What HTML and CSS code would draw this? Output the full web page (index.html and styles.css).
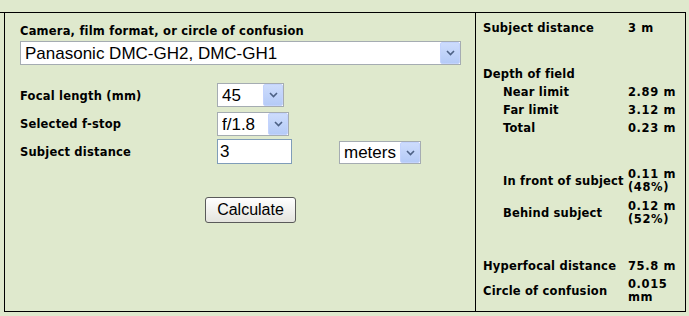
FILE: index.html
```html
<!DOCTYPE html>
<html lang="en">
<head>
  <meta charset="UTF-8">
  <title>Depth of Field Calculator</title>
  <link rel="stylesheet" href="styles.css">
</head>
<body>

  <div class="strip"></div>

  <div class="calc">
    <!-- inputs -->
    <form class="inputs">
      <p class="label">Camera, film format, or circle of confusion</p>
      <div class="pick pick-wide">
        <select><option>Panasonic DMC-GH2, DMC-GH1</option></select>
        <span class="arrow"><svg width="9" height="6" viewBox="0 0 9 6"><path d="M1 1 L4.5 4.5 L8 1" fill="none" stroke="#4d6185" stroke-width="1.6"/></svg></span>
      </div>

      <div class="rows">
        <span class="label">Focal length (mm)</span>
        <div class="pick pick-focal">
          <select><option>45</option></select>
          <span class="arrow"><svg width="9" height="6" viewBox="0 0 9 6"><path d="M1 1 L4.5 4.5 L8 1" fill="none" stroke="#4d6185" stroke-width="1.6"/></svg></span>
        </div>
        <span></span>

        <span class="label">Selected f-stop</span>
        <div class="pick pick-stop">
          <select><option>f/1.8</option></select>
          <span class="arrow"><svg width="9" height="6" viewBox="0 0 9 6"><path d="M1 1 L4.5 4.5 L8 1" fill="none" stroke="#4d6185" stroke-width="1.6"/></svg></span>
        </div>
        <span></span>

        <span class="label">Subject distance</span>
        <input class="dist" type="text" value="3">
        <div class="pick pick-unit">
          <select><option>meters</option></select>
          <span class="arrow"><svg width="9" height="6" viewBox="0 0 9 6"><path d="M1 1 L4.5 4.5 L8 1" fill="none" stroke="#4d6185" stroke-width="1.6"/></svg></span>
        </div>
      </div>

      <div class="go">
        <button type="button">Calculate</button>
      </div>
    </form>

    <!-- results -->
    <div class="results">
      <div class="res">
        <span class="name">Subject distance</span><span class="val">3 m</span>
      </div>

      <div class="res group"><span class="name">Depth of field</span><span></span></div>
      <div class="res sub"><span class="name">Near limit</span><span class="val">2.89 m</span></div>
      <div class="res sub"><span class="name">Far limit</span><span class="val">3.12 m</span></div>
      <div class="res sub"><span class="name">Total</span><span class="val">0.23 m</span></div>

      <div class="res sub tall group"><span class="name">In front of subject</span><span class="val">0.11 m<br>(48%)</span></div>
      <div class="res sub tall"><span class="name">Behind subject</span><span class="val">0.12 m<br>(52%)</span></div>

      <div class="res group"><span class="name">Hyperfocal distance</span><span class="val">75.8 m</span></div>
      <div class="res tall"><span class="name">Circle of confusion</span><span class="val">0.015<br>mm</span></div>
    </div>
  </div>

</body>
</html>
```

FILE: styles.css
```css
* {
  margin: 0;
  padding: 0;
  box-sizing: border-box;
}

body {
  background-color: #dfe9cd;
  color: #000;
  font-family: "DejaVu Sans", Verdana, sans-serif;
  font-size: 11.5px;
  font-weight: bold;
  letter-spacing: 0.2px;
}

/* top rule of the page */
.strip {
  width: 686px;
  height: 13px;
  border-bottom: 1px solid #000;
}

.calc {
  display: flex;
  width: 682px;
  margin-left: 4px;
  border: 1px solid #000;
  border-top: none;
}

/* left side */
.inputs {
  width: 471px;
  flex: none;
  border-right: 1px solid #000;
  padding: 11px 0 0 15px;
}

.label {
  line-height: 14px;
}

.pick {
  position: relative;
  height: 24px;
}

.pick select {
  appearance: none;
  -webkit-appearance: none;
  width: 100%;
  height: 100%;
  border: 1px solid #a5acb2;
  background: #fff;
  font-family: "Liberation Sans", Arial, sans-serif;
  font-size: 17px;
  font-weight: normal;
  letter-spacing: 0;
  color: #000;
  padding: 0 0 0 4px;
  outline: none;
}

/* the blue dropdown button sits over the select */
.pick .arrow {
  position: absolute;
  top: 1px;
  right: 1px;
  bottom: 1px;
  width: 20px;
  display: flex;
  align-items: center;
  justify-content: center;
  background: linear-gradient(#cddcfc, #b5cbf7);
  border: 1px solid #c3d3fd;
  border-radius: 2px;
  pointer-events: none;
}

.pick-wide {
  width: 441px;
  margin-top: 3px;
}

.pick-focal { width: 67px; }
.pick-stop { width: 72px; margin-top: 1px; }
.pick-unit { width: 82px; height: 23px; margin-top: 2px; }

.rows {
  display: grid;
  grid-template-columns: 197px 122px auto;
  grid-auto-rows: 24px;
  row-gap: 4px;
  align-items: start;
  margin-top: 18px;
}

.rows .label {
  align-self: center;
  padding-top: 2px;
}

.dist {
  width: 75px;
  height: 25px;
  border: 1px solid #7f9db9;
  background: #fff;
  font-family: "Liberation Sans", Arial, sans-serif;
  font-size: 17px;
  font-weight: normal;
  padding: 0 2px;
  outline: none;
}

.go {
  margin-top: 34px;
  padding-left: 185px;
}

.go button {
  width: 91px;
  height: 26px;
  font-family: "Liberation Sans", Arial, sans-serif;
  font-size: 16px;
  font-weight: normal;
  letter-spacing: 0;
  color: #000;
  border: 1px solid #5a5a5a;
  border-radius: 3px;
  background: linear-gradient(#ffffff, #e4e4de);
  cursor: pointer;
}

/* right side */
.results {
  flex: 1;
  padding: 6px 0 4px 7px;
}

.res {
  display: flex;
  align-items: center;
  height: 18px;
  line-height: 12px;
}

.res .name {
  width: 145px;
  flex: none;
}

.res.sub {
  padding-left: 20px;
}

.res.sub .name {
  width: 125px;
}

.res.tall {
  height: 32px;
  line-height: 13px;
}

.res.group {
  margin-top: 28px;
}

.val {
  letter-spacing: 0.6px;
}
```
